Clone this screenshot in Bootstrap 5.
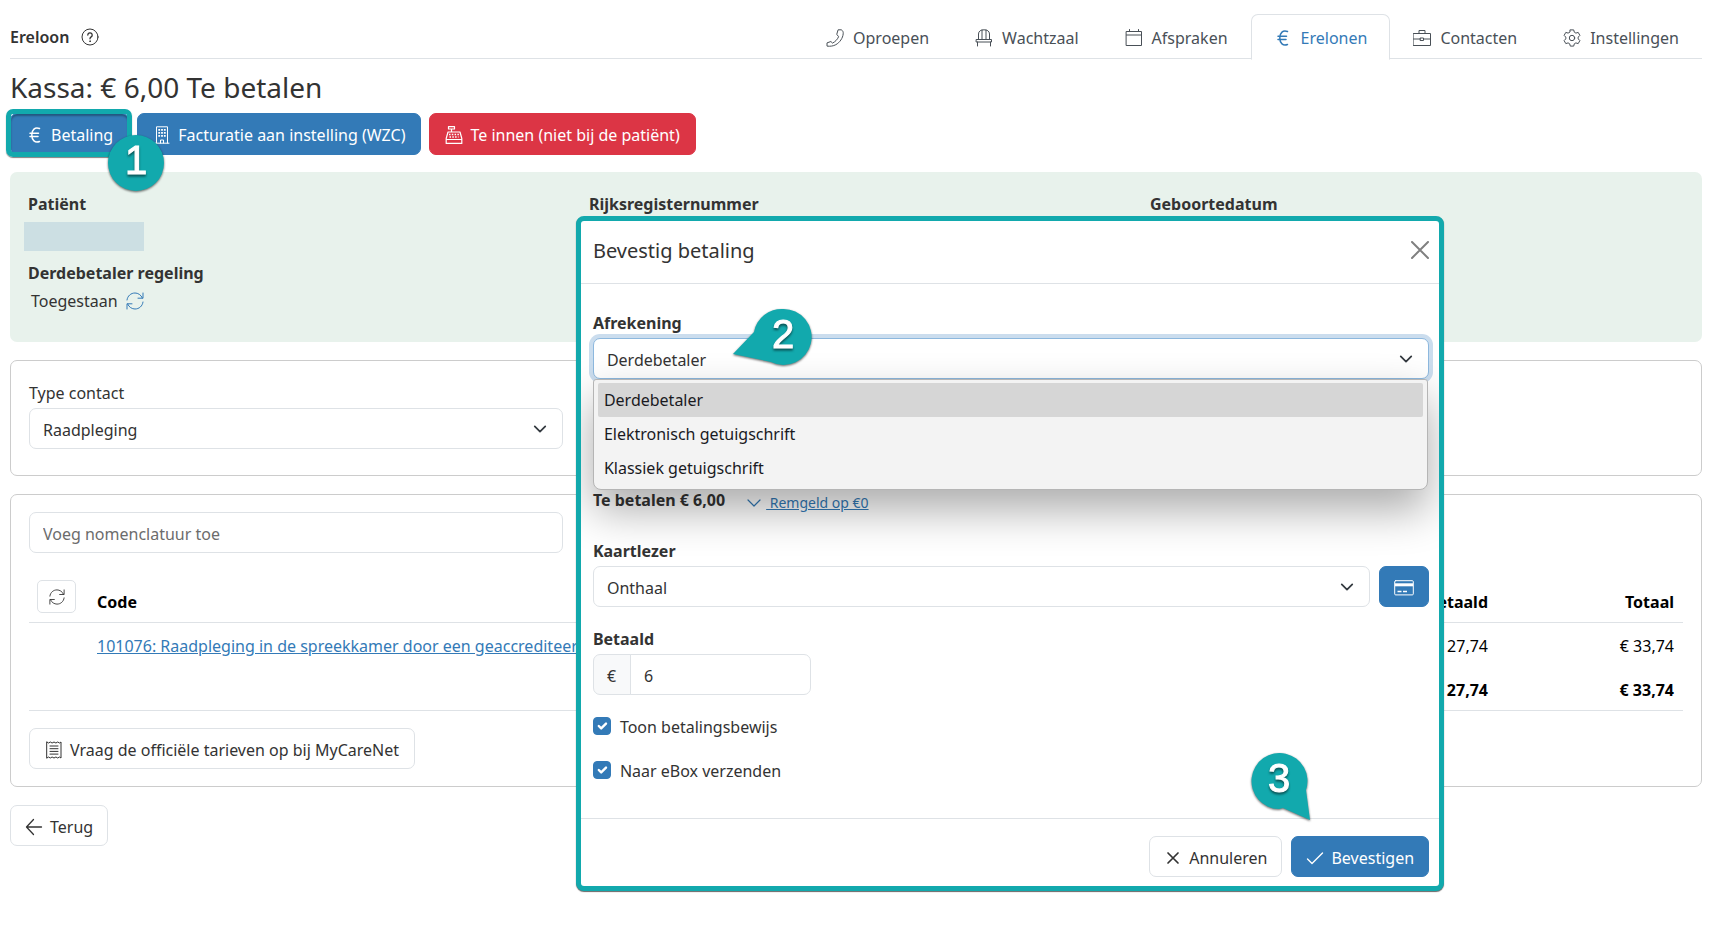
<!DOCTYPE html>
<html lang="nl">
<head>
<meta charset="utf-8">
<meta name="viewport" content="width=device-width, initial-scale=1">
<title>Ereloon</title>
<link href="https://cdn.jsdelivr.net/npm/bootstrap@5.3.0/dist/css/bootstrap.min.css" rel="stylesheet">
<style>
  :root { --brand: #337ab7; --mark: #12a9ad; --line: #dee2e6; --ink: #333; }
  body { font-family: "Noto Sans", "Open Sans", sans-serif; font-size: 16px; line-height: 26px; color: var(--ink); }
  a { color: var(--brand); }
  .page { padding: 14px 12px 60px 10px; }
  .ico { width: 18px; height: 18px; flex: none; fill: none; stroke: currentColor; stroke-width: 1; stroke-linecap: round; stroke-linejoin: round; }

  .topbar { border-bottom: 1px solid var(--line); }
  .topbar .nav-tabs { border: 0; margin-bottom: -1px; }
  .topbar .nav-link { display: flex; align-items: center; gap: 9px; padding: 10px 22px 9px; height: 46px; color: #495057; border-radius: 7px 7px 0 0; }
  .topbar .nav-link.active { color: var(--brand); }
  .page-title { font-size: 28px; line-height: 36px; margin: 10px 0 8px; font-weight: 400; }

  .btn { --bs-btn-font-size: 16px; --bs-btn-line-height: 26px; --bs-btn-padding-x: 15px; --bs-btn-border-radius: 7px; padding-top: 8px; padding-bottom: 6px; display: inline-flex; align-items: center; gap: 7px; height: 42px; }
  .btn-primary { --bs-btn-bg: var(--brand); --bs-btn-border-color: var(--brand); }
  .btn-plain { --bs-btn-color: var(--ink); --bs-btn-bg: #fff; --bs-btn-border-color: var(--line); height: 41px; }
  .btn-icon { --bs-btn-padding-x: 9px; padding-top: 6px; height: 33px; width: 39px; justify-content: center; --bs-btn-border-radius: 5px; margin-left: -1px; }
  .btn-icon .ico { width: 16px; height: 16px; }
  .btn-pressed { box-shadow: inset 0 2px 2px rgba(0,0,0,.3); }
  .btn-back { margin-top: 18px; --bs-btn-padding-x: 14px; }

  .ring { position: absolute; inset: -4px -3px -2px -4px; border: 5px solid var(--mark); border-radius: 7px; box-shadow: 0 1px 1px rgba(0,0,0,.5); pointer-events: none; }
  .callout { position: absolute; overflow: visible; width: 56px; height: 56px; filter: drop-shadow(0 1px 1px rgba(0,0,0,.6)); pointer-events: none; z-index: 5; }
  .callout .shape { fill: var(--mark); }
  .callout text { font: 40px "Liberation Sans", sans-serif; fill: #fff; stroke: #fff; stroke-width: 1px; text-anchor: middle; filter: drop-shadow(0 2px 1px rgba(0,0,0,.5)); }
  .callout-one { left: 98px; top: 22px; }
  .callout-two { left: 162px; top: -29px; }
  .callout-three { right: 132px; top: -66px; }

  .patient { background: #e8f2ec; border-radius: 7px; padding: 19px 0 0 9px; margin-top: 17px; min-height: 170px; }
  .patient .col-4 { padding: 0 9px; }
  .patient strong, .field-title { display: block; font-weight: 700; }
  .redacted { width: 120px; height: 29px; background: #ccdfe3; margin: 5px 0 9px -4px; }
  .allowed { gap: 8px; padding: 2px 0 0 3px; }
  .panel { border: 1px solid #ccc; border-radius: 7px; padding: 17px 18px; margin-top: 18px; }
  .panel .col-4 { padding-right: 17px; }
  .contact-panel { padding-top: 19px; padding-bottom: 26px; }
  .contact-panel label { margin-bottom: 2px; }
  .form-select, .form-control { font-size: 16px; line-height: 26px; height: 41px; padding: 8px 13px 6px; border-color: var(--line); border-radius: 7px; color: var(--ink); }
  .form-select { background-position: right 13px center; background-size: 18px 14px; padding-right: 40px; }
  .form-control::placeholder { color: #6c6c6c; opacity: 1; }

  .fees { margin: 18px 0 17px; --bs-table-color: #000; --bs-table-bg: transparent; border-color: var(--line); table-layout: fixed; width: 100%; }
  .fees th, .fees td { padding: 10px 9px 8px; line-height: 26px; white-space: nowrap; border-bottom-width: 0; vertical-align: bottom; }
  .fees thead th { border-bottom-width: 1px; padding: 9px 9px 7px; }
  .fees thead th:first-child { padding-bottom: 9px; }
  .fees tbody tr:last-child > * { border-bottom-width: 1px; padding-bottom: 7px; }
  .fees tr > :first-child { width: 59px; }
  .fees tr > :nth-child(n+3) { width: 186px; }

  .pay-dialog { position: absolute; top: 216px; left: 33.6%; right: 15.75%; background: #fff; border: 5px solid var(--mark); border-radius: 8px; box-shadow: 0 1px 1px rgba(0,0,0,.6); z-index: 3; }
  .pay-head { padding: 14px 10px 16px 12px; height: 63px; border-bottom: 1px solid var(--line); }
  .pay-head h2 { font-size: 20px; line-height: 30px; margin: 0; font-weight: 400; }
  .btn-x { border: 0; background: none; padding: 0 0 3px; color: #808080; line-height: 0; }
  .btn-x svg { width: 18px; height: 18px; stroke: currentColor; stroke-width: 2; stroke-linecap: round; }
  .pay-body { padding: 26px 10px 34px 12px; overflow: hidden; border-bottom: 1px solid var(--line); }
  .field-title { margin-bottom: 2px; }
  .settle { position: relative; margin-bottom: 105px; }
  .settle .form-select { border-color: #8db8de; box-shadow: 0 0 0 4px #cbddee; }
  .options { position: absolute; top: 41px; left: 0; right: 1px; margin: 0; padding: 3px 4px 4px; list-style: none; background: #f3f3f3; border: 1px solid #b5b5b5; border-radius: 3px 3px 8px 8px; box-shadow: 0 20px 44px rgba(0,0,0,.33); z-index: 2; }
  .options li { line-height: 34px; padding: 0 6px; color: #1a1a1f; border-radius: 2px; }
  .options li[aria-selected="true"] { background: #d6d6d6; }
  .to-pay { gap: 20px; margin-bottom: 22px; }
  .to-pay a { font-size: 14px; display: inline-flex; align-items: center; gap: 3px; padding-top: 6px; }
  .reader { gap: 9px; margin-bottom: 19px; }
  .reader .btn { --bs-btn-padding-x: 14px; height: 41px; width: 50px; justify-content: center; }
  .reader .ico { width: 20px; height: 20px; }
  .amount { width: 218px; margin-bottom: 19px; }
  .amount .input-group-text { font-size: 16px; padding: 8px 13px 6px; border-radius: 7px; border-color: var(--line); background: #f8f9fa; color: var(--ink); width: 38px; }
  .tick { display: flex; align-items: center; gap: 9px; height: 26px; margin-bottom: 18px; }
  .tick .form-check-input { width: 18px; height: 18px; margin: 0 0 3px; border-radius: 4px; }
  .form-check-input:checked { background-color: var(--brand); border-color: var(--brand); }
  .pay-foot { position: relative; padding: 17px 10px 9px; gap: 9px; }
  .pay-foot .btn { --bs-btn-padding-x: 14px; height: 41px; }
</style>
</head>
<body>
<div class="page">
  <header class="topbar d-flex justify-content-between align-items-end">
    <div class="d-flex align-items-center gap-2 pb-2 fw-semibold">Ereloon
      <svg class="ico ms-1" viewBox="0 0 18 18"><circle cx="9" cy="9" r="8"/><path d="M6.8 7a2.2 2.2 0 1 1 3.4 1.9c-.8.5-1.2.9-1.2 1.9" stroke-width="1.3"/><circle cx="9" cy="13.2" r=".4"/></svg>
    </div>
    <ul class="nav nav-tabs">
      <li class="nav-item"><a class="nav-link" href="#"><svg class="ico" viewBox="0 0 18 18"><path d="M12.500.8h2.800c1.600.9 2.100 2.300 1.900 4-.4 4.300-3.400 8.700-7.400 10.900-2.700 1.400-5.400 1.800-8.800 1.400v-3.200l3.900-1.400 1.600 1.600c2.600-1.300 4.900-3.500 6.100-6.400L11 5.600z"/></svg>Oproepen</a></li>
      <li class="nav-item"><a class="nav-link" href="#"><svg class="ico" viewBox="0 0 18 18"><path d="M3.500 10.500V5C3.500 2 6 .8 9 .8S14.500 2 14.500 5v5.500M7 10.500V1M11 10.500V1M1.500 10.500h15v2.500h-15zM2.500 13v4M15.500 13v4"/></svg>Wachtzaal</a></li>
      <li class="nav-item"><a class="nav-link" href="#"><svg class="ico" viewBox="0 0 18 18"><path d="M1.500 2.500h15v14h-15zM1.500 6h15M4.500.5v2M13.500.5v2"/></svg>Afspraken</a></li>
      <li class="nav-item"><a class="nav-link active" href="#" aria-current="page"><svg class="ico" viewBox="0 0 18 18"><path d="M13.500 2.500C9 .8 5.800 3.600 5.800 9s3.200 8.200 7.700 6.500M4 7.300h8.500M4 10.500h8" stroke-width="1.500"/></svg>Erelonen</a></li>
      <li class="nav-item"><a class="nav-link" href="#"><svg class="ico" viewBox="0 0 18 18"><path d="M.5 4.500h17v12H.500zM6 4.500v-3h6v3M.5 10h7M10.500 10h7M7.500 9h3v2.500h-3z"/></svg>Contacten</a></li>
      <li class="nav-item"><a class="nav-link" href="#"><svg class="ico" viewBox="0 0 18 18"><circle cx="9" cy="9" r="2.700"/><path d="M7.300.9h3.400l.6 2.300 1.600.9 2.300-.7 1.700 3-1.700 1.700v1.800l1.700 1.700-1.700 3-2.300-.7-1.600.9-.6 2.300H7.300l-.6-2.300-1.600-.9-2.300.7-1.700-3 1.700-1.700V8.100L1.100 6.400l1.700-3 2.300.7 1.600-.9z"/></svg>Instellingen</a></li>
    </ul>
  </header>

  <h1 class="page-title">Kassa: € 6,00 Te betalen</h1>

  <div class="d-flex gap-2">
    <div class="position-relative">
      <button type="button" class="btn btn-primary btn-pressed"><svg class="ico" viewBox="0 0 18 18"><path d="M13.500 2.500C9 .8 5.800 3.600 5.800 9s3.200 8.200 7.700 6.500M4 7.300h8.500M4 10.500h8" stroke-width="1.500"/></svg>Betaling</button>
      <span class="ring"></span>
      <svg class="callout callout-one" viewBox="0 0 56 56"><circle class="shape" cx="28" cy="28" r="28"/><text x="28" y="39">1</text></svg>
    </div>
    <button type="button" class="btn btn-primary"><svg class="ico" viewBox="0 0 18 18"><path d="M3.500 17V.800h11V17M2 17.200h14M7.500 17v-3h3v3"/><path d="M6.200 3v9M9 3v9M11.800 3v9" stroke-width="1.800" stroke-dasharray="1.800 1.200" stroke-linecap="butt"/></svg>Facturatie aan instelling (WZC)</button>
    <button type="button" class="btn btn-danger"><svg class="ico" viewBox="0 0 18 18"><path d="M3.500.6h6v2.400h-6zM6.500 3v3M3 6h12l1.800 6.500v4.900H1.200v-4.900zM1.200 13.500h15.600" stroke-width="1.200"/><path d="M4 8.500h10M4.500 11h9" stroke-width="1.500" stroke-dasharray="1.500 1.300" stroke-linecap="butt"/></svg>Te innen (niet bij de patiënt)</button>
  </div>

  <section class="patient">
    <div class="row g-0">
      <div class="col-4">
        <strong>Patiënt</strong>
        <div class="redacted"></div>
        <strong>Derdebetaler regeling</strong>
        <div class="allowed d-flex align-items-center">Toegestaan
          <a href="#" class="d-flex" aria-label="Vernieuwen"><svg class="ico" viewBox="0 0 18 18"><path d="M1 8C1.500 3.800 5 1 9 1c3 0 6 1.800 7.400 5M17 1v5.200h-5M17 10c-.5 4.200-4 7-8 7-3 0-6-1.800-7.400-5M1 17v-5.200h5"/></svg></a>
        </div>
      </div>
      <div class="col-4"><strong>Rijksregisternummer</strong></div>
      <div class="col-4"><strong>Geboortedatum</strong></div>
    </div>
  </section>

  <section class="panel contact-panel">
    <div class="row g-0">
      <div class="col-4">
        <label for="contactType" class="d-block">Type contact</label>
        <select id="contactType" class="form-select"><option>Raadpleging</option></select>
      </div>
    </div>
  </section>

  <section class="panel">
    <div class="row g-0">
      <div class="col-4"><input type="text" class="form-control" placeholder="Voeg nomenclatuur toe" aria-label="Voeg nomenclatuur toe"></div>
    </div>
    <table class="table fees">
      <thead>
        <tr>
          <th><button type="button" class="btn btn-plain btn-icon" aria-label="Vernieuwen"><svg class="ico" viewBox="0 0 18 18"><path d="M1 8C1.500 3.800 5 1 9 1c3 0 6 1.800 7.400 5M17 1v5.200h-5M17 10c-.5 4.200-4 7-8 7-3 0-6-1.800-7.400-5M1 17v-5.200h5"/></svg></button></th>
          <th>Code</th><th class="text-end">Terugbetaald</th><th class="text-end">Totaal</th>
        </tr>
      </thead>
      <tbody>
        <tr><td></td><td><a href="#">101076: Raadpleging in de spreekkamer door een geaccrediteer</a></td><td class="text-end">€ 27,74</td><td class="text-end">€ 33,74</td></tr>
        <tr class="fw-bold"><td></td><td></td><td class="text-end">€ 27,74</td><td class="text-end">€ 33,74</td></tr>
      </tbody>
    </table>
    <button type="button" class="btn btn-plain"><svg class="ico" viewBox="0 0 18 18"><path d="M2 1l1.500 1L5.300 1l1.800 1L9 1l1.900 1 1.800-1 1.800 1L16 1v16l-1.500-1-1.800 1-1.800-1L9 17l-1.900-1-1.800 1-1.800-1L2 17zM5 5h8M5 7.700h8M5 10.400h8M5 13.100h8"/></svg>Vraag de officiële tarieven op bij MyCareNet</button>
  </section>

  <button type="button" class="btn btn-plain btn-back"><svg class="ico" viewBox="0 0 18 18"><path d="M16.500 9H2M8.500 1.500L1.500 9l7 7.500" stroke-width="1.300"/></svg>Terug</button>
</div>

<section class="pay-dialog" role="dialog" aria-labelledby="payTitle">
  <div class="pay-head d-flex justify-content-between align-items-center">
    <h2 id="payTitle">Bevestig betaling</h2>
    <button type="button" class="btn-x" aria-label="Sluiten"><svg viewBox="0 0 18 18"><path d="M1 1l16 16M17 1L1 17"/></svg></button>
  </div>
  <form class="pay-body">
    <label class="field-title" for="settlement">Afrekening</label>
    <div class="settle">
      <select id="settlement" class="form-select"><option>Derdebetaler</option><option>Elektronisch getuigschrift</option><option>Klassiek getuigschrift</option></select>
      <ul class="options" role="listbox" aria-label="Afrekening">
        <li role="option" aria-selected="true">Derdebetaler</li>
        <li role="option">Elektronisch getuigschrift</li>
        <li role="option">Klassiek getuigschrift</li>
      </ul>
      <svg class="callout callout-two" viewBox="0 0 56 56"><path class="shape" d="M28 0a28 28 0 1 1-12 53L-22 45-1 23A28 28 0 0 1 28 0z"/><text x="28" y="39">2</text></svg>
    </div>
    <div class="to-pay d-flex align-items-center">
      <strong>Te betalen € 6,00</strong>
      <a href="#"><svg class="ico" viewBox="0 0 18 18"><path d="M3 6l6 6 6-6" stroke-width="1.200"/></svg><span>&nbsp;Remgeld op €0</span></a>
    </div>
    <label class="field-title" for="cardReader">Kaartlezer</label>
    <div class="reader d-flex">
      <select id="cardReader" class="form-select"><option>Onthaal</option></select>
      <button type="button" class="btn btn-primary" aria-label="Kaart lezen"><svg class="ico" viewBox="0 0 20 20"><rect x=".7" y="2.700" width="18.600" height="14.200" rx="1"/><path d="M1 6.800h18" stroke-width="3" stroke-linecap="butt"/><path d="M3.500 13.500h4M9 13.500h4" stroke-linecap="butt" stroke-width="1.300"/></svg></button>
    </div>
    <label class="field-title" for="paid">Betaald</label>
    <div class="input-group amount">
      <span class="input-group-text">€</span>
      <input id="paid" type="text" class="form-control" value="6">
    </div>
    <div class="tick"><input class="form-check-input" type="checkbox" id="proof" checked><label for="proof">Toon betalingsbewijs</label></div>
    <div class="tick mb-0"><input class="form-check-input" type="checkbox" id="ebox" checked><label for="ebox">Naar eBox verzenden</label></div>
  </form>
  <div class="pay-foot d-flex justify-content-end">
    <button type="button" class="btn btn-plain"><svg class="ico" viewBox="0 0 18 18"><path d="M4 4l10 10M14 4L4 14" stroke-width="1.700"/></svg>Annuleren</button>
    <button type="submit" class="btn btn-primary"><svg class="ico" viewBox="0 0 18 18"><path d="M1.500 10l4.500 4.500L16.500 4" stroke-width="1.400"/></svg>Bevestigen</button>
    <svg class="callout callout-three" viewBox="0 0 56 56"><path class="shape" d="M28 56A28 28 0 1 1 55 37L59 67 32 55z"/><text x="28" y="39">3</text></svg>
  </div>
</section>
<script src="https://cdn.jsdelivr.net/npm/bootstrap@5.3.0/dist/js/bootstrap.bundle.min.js"></script>
</body>
</html>
